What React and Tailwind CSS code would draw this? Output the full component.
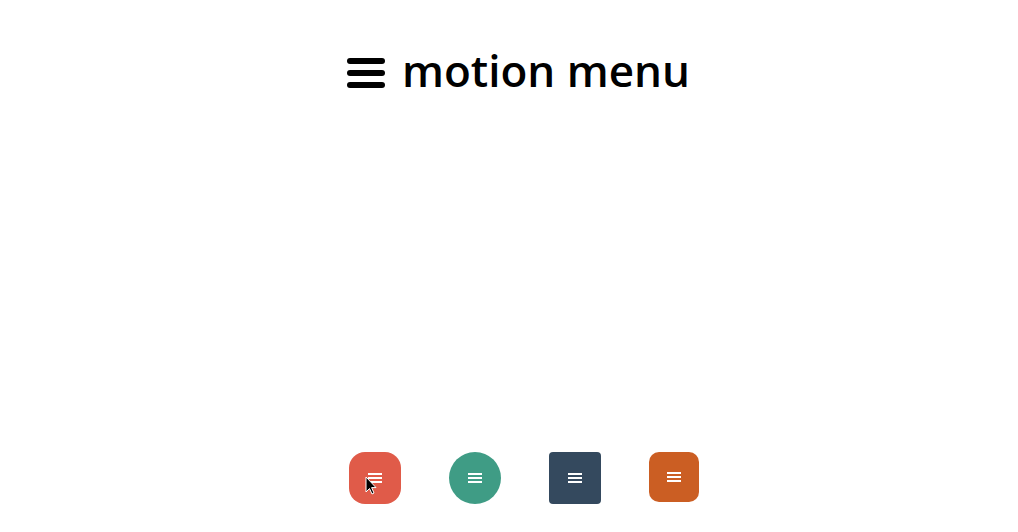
import React from 'react'

function Bars({ className = '' }) {
  return (
    <svg viewBox="0 0 14 12" className={className} fill="none" stroke="white" strokeWidth="2">
      <line x1="0" y1="2" x2="14" y2="2" />
      <line x1="0" y1="6" x2="14" y2="6" />
      <line x1="0" y1="10" x2="14" y2="10" />
    </svg>
  )
}

function Cursor() {
  return (
    <svg viewBox="0 0 12 19" className="absolute left-[16px] top-[24px] h-[19px] w-[12px]">
      <path d="M1 1 L1 16 L4.5 12.5 L7 18 L9 17 L6.6 11.6 L11 11.6 Z" fill="black" stroke="white" strokeWidth="1" strokeLinejoin="round" />
    </svg>
  )
}

export default function App() {
  const buttons = [
    { cls: 'bg-[#e05b49] rounded-[16px] w-[52px] h-[52px]', cursor: true },
    { cls: 'bg-[#3f9c85] rounded-full w-[52px] h-[52px]' },
    { cls: 'bg-[#34495e] rounded-[4px] w-[52px] h-[52px]' },
    { cls: 'bg-[#cb5e23] rounded-[10px] w-[50px] h-[50px]' },
  ]
  return (
    <div className="flex h-screen w-full flex-col items-center bg-white font-['Open_Sans',sans-serif]">
      <h1 className="mt-[42px] ml-[19px] flex items-center gap-[17px] text-[44px] font-semibold leading-[56px] text-black [font-variant-ligatures:none]">
        <svg viewBox="0 0 38 30" className="mt-[6px] h-[30px] w-[38px]" stroke="black" strokeWidth="6" strokeLinecap="round">
          <line x1="3" y1="3" x2="35" y2="3" />
          <line x1="3" y1="15" x2="35" y2="15" />
          <line x1="3" y1="27" x2="35" y2="27" />
        </svg>
        <span>motion menu</span>
      </h1>
      <div className="mt-auto mb-[28px] ml-[29px] flex items-start gap-[48px]">
        {buttons.map((b, i) => (
          <div key={i} className={`relative flex items-center justify-center ${b.cls}`}>
            <Bars className="h-[12px] w-[14px]" />
            {b.cursor && <Cursor />}
          </div>
        ))}
      </div>
    </div>
  )
}
